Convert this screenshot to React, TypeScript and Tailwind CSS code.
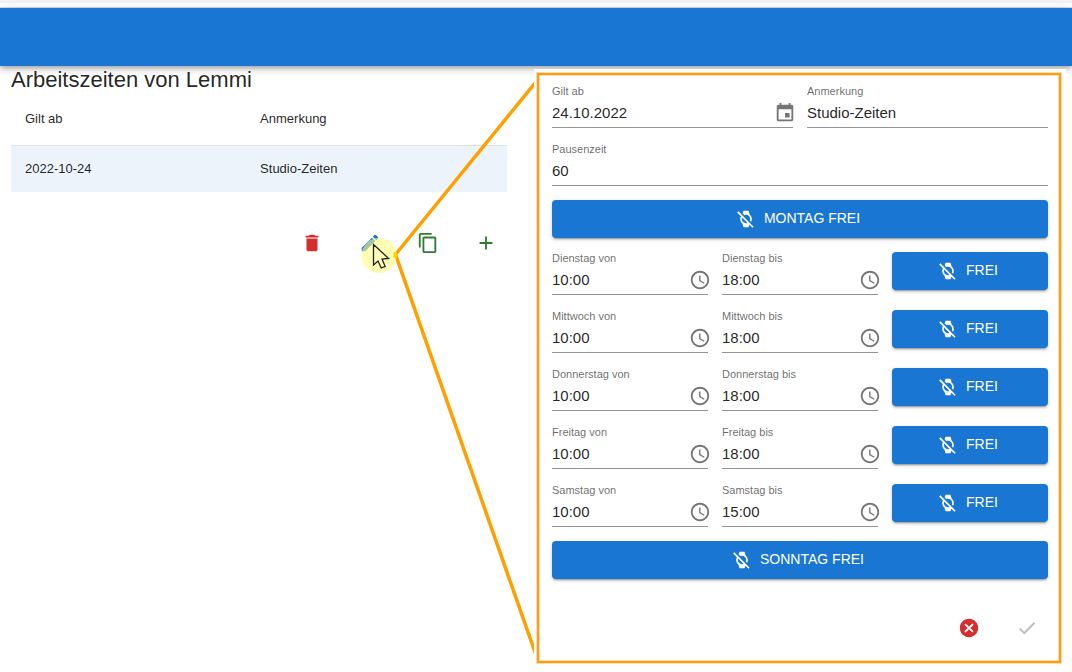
import { useId, useState } from 'react';
import type { ReactNode } from 'react';
import {
  MdAccessTime,
  MdAdd,
  MdCancel,
  MdCheck,
  MdContentCopy,
  MdDelete,
  MdEdit,
  MdEvent,
} from 'react-icons/md';

function WatchOffIcon() {
  return (
    <svg viewBox="0 0 24 24" className="-ml-1 size-5 shrink-0" fill="currentColor" aria-hidden="true">
      <path d="M12 7c2.76 0 5 2.24 5 5 0 .64-.13 1.25-.35 1.82l1.5 1.5c.54-.99.85-2.12.85-3.32 0-2.22-1.03-4.19-2.64-5.47L15 2H9L7.95 5.13l2.23 2.23C10.75 7.13 11.36 7 12 7zM2.81 2.81 1.39 4.22l4.46 4.46C5.31 9.67 5 10.8 5 12c0 2.22 1.03 4.19 2.64 5.47L9 22h6l1.05-3.13 3.72 3.72 1.41-1.41L2.81 2.81zM12 17c-2.76 0-5-2.24-5-5 0-.64.13-1.25.35-1.82l6.47 6.47c-.57.22-1.18.35-1.82.35z" />
    </svg>
  );
}

type FieldProps = { label: string; initial: string; icon?: ReactNode; iconLabel?: string };

function Field({ label, initial, icon, iconLabel }: FieldProps) {
  const id = useId();
  const [value, setValue] = useState(initial);
  return (
    <div className="flex min-w-0 flex-col border-b border-[#949494]">
      <label htmlFor={id} className="text-[11px] leading-[13px] text-black/60">
        {label}
      </label>
      <div className="flex h-[29px] items-center pt-px">
        <input
          id={id}
          type="text"
          value={value}
          onChange={(e) => setValue(e.target.value)}
          className="w-full min-w-0 flex-1 bg-transparent text-[15px] leading-5 text-black/87 outline-none"
        />
        {icon && (
          <button type="button" aria-label={iconLabel} className="-mr-[3px] shrink-0 text-[22px] text-black/54">
            {icon}
          </button>
        )}
      </div>
    </div>
  );
}

function FreeButton({ children }: { children: ReactNode }) {
  return (
    <button
      type="button"
      className="flex h-[38px] w-full items-center justify-center gap-2 rounded bg-[#1976d2] text-[14px] leading-5 text-white shadow-[0_3px_1px_-2px_rgba(0,0,0,0.2),0_2px_2px_0_rgba(0,0,0,0.14),0_1px_5px_0_rgba(0,0,0,0.12)]"
    >
      <WatchOffIcon />
      <span className="pb-0.5">{children}</span>
    </button>
  );
}

const days = [
  { name: 'Dienstag', from: '10:00', to: '18:00' },
  { name: 'Mittwoch', from: '10:00', to: '18:00' },
  { name: 'Donnerstag', from: '10:00', to: '18:00' },
  { name: 'Freitag', from: '10:00', to: '18:00' },
  { name: 'Samstag', from: '10:00', to: '15:00' },
];

const actionClass = 'flex h-9 w-[58px] items-center justify-center text-[22px]';

export default function App() {
  return (
    <div className="min-h-screen bg-white font-['Liberation_Sans',Arial,sans-serif] text-black/87">
      <div className="h-[3px] bg-[#f1f3f4]" />
      <div className="h-[5px] border-b border-[#dadce0]" />
      <header className="h-[58px] bg-[#1976d2] shadow-[0_2px_4px_-1px_rgba(0,0,0,0.2),0_4px_5px_0_rgba(0,0,0,0.14),0_1px_10px_0_rgba(0,0,0,0.12)]" />

      <main className="grid grid-cols-2">
        <section className="relative pr-[21px] pl-[11px]">
          <h1 className="text-[22px] leading-7">Arbeitszeiten von Lemmi</h1>
          <div className="pr-2">
            <table className="w-full table-fixed border-collapse text-left text-[13px] leading-5">
              <thead>
                <tr className="h-[51px] border-b border-[#dfe1e3]">
                  <th className="w-[47%] px-[14px] font-normal">Gilt ab</th>
                  <th className="px-4 font-normal">Anmerkung</th>
                </tr>
              </thead>
              <tbody>
                <tr className="h-[47px] bg-[#ecf3fb]">
                  <td className="px-[14px]">2022-10-24</td>
                  <td className="px-4">Studio-Zeiten</td>
                </tr>
              </tbody>
            </table>
          </div>
          <div className="mt-[33px] flex justify-end">
            <button type="button" aria-label="Löschen" className={`${actionClass} text-[#d32f2f]`}>
              <MdDelete />
            </button>
            <button type="button" aria-label="Bearbeiten" className={`${actionClass} text-[#1976d2]`}>
              <MdEdit />
            </button>
            <button type="button" aria-label="Kopieren" className={`${actionClass} text-[#2e7d32]`}>
              <MdContentCopy />
            </button>
            <button type="button" aria-label="Hinzufügen" className={`${actionClass} text-[#2e7d32]`}>
              <MdAdd />
            </button>
          </div>

          <svg
            viewBox="358 66 176 606"
            className="pointer-events-none absolute top-0 right-[2px] h-[606px] w-[176px]"
            fill="none"
            aria-hidden="true"
          >
            <path d="M537 80.500 L395.500 254.500 L536 655" stroke="#ffa000" strokeWidth="3.500" />
            <circle cx="379" cy="255.500" r="17.500" fill="#ffff80" fillOpacity="0.6" />
            <path d="M395 252v6" stroke="#ffd500" strokeWidth="3" />
            <path
              d="M373.500 244.500V265l4.500-4 3.200 7 4-1.700-3.200-7.300 6.600-.6z"
              fill="#ffffc0"
              fillOpacity="0.7"
              stroke="#222"
              strokeWidth="1.300"
            />
          </svg>
        </section>

        <section className="mt-[3px] mr-[6px] -ml-[2px] bg-white pt-1 pr-[5px] pl-[3px]">
          <form
            onSubmit={(e) => e.preventDefault()}
            className="flex flex-col gap-[14px] border-2 border-[#ffa000] pt-[10px] pr-[11px] pb-[15px] pl-[13px] shadow-[0_0_0_1px_#ffd9c4,inset_0_0_0_1px_#ffd9c4]"
          >
            <div className="flex flex-col gap-[15px]">
              <div className="grid grid-cols-2 gap-[14px]">
                <Field label="Gilt ab" initial="24.10.2022" icon={<MdEvent />} iconLabel="Datum wählen" />
                <Field label="Anmerkung" initial="Studio-Zeiten" />
              </div>
              <Field label="Pausenzeit" initial="60" />
            </div>

            <FreeButton>MONTAG FREI</FreeButton>

            <div className="flex flex-col gap-[15px]">
              {days.map((day) => (
                <div key={day.name} className="grid grid-cols-3 gap-[14px]">
                  <Field label={`${day.name} von`} initial={day.from} icon={<MdAccessTime />} iconLabel="Uhrzeit wählen" />
                  <Field label={`${day.name} bis`} initial={day.to} icon={<MdAccessTime />} iconLabel="Uhrzeit wählen" />
                  <FreeButton>FREI</FreeButton>
                </div>
              ))}
            </div>

            <FreeButton>SONNTAG FREI</FreeButton>

            <div className="-mr-2 flex justify-end pt-[17px]">
              <button type="button" aria-label="Abbrechen" className={`${actionClass} text-[#d32f2f]`}>
                <MdCancel />
              </button>
              <button type="submit" disabled aria-label="Speichern" className={`${actionClass} text-black/26`}>
                <MdCheck />
              </button>
            </div>
          </form>
        </section>
      </main>
    </div>
  );
}
